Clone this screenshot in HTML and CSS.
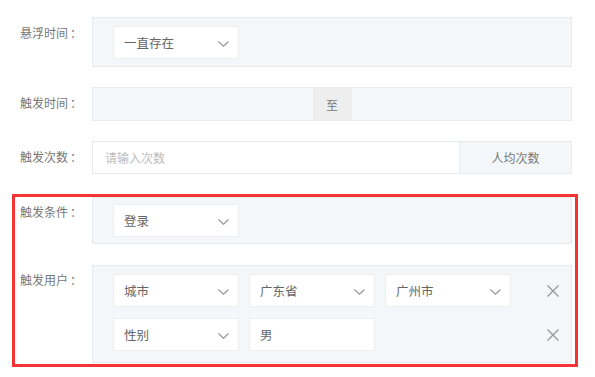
FILE: index.html
```html
<!DOCTYPE html>
<html lang="zh-CN">
<head>
  <meta charset="UTF-8">
  <title>触发设置</title>
  <link rel="stylesheet" href="styles.css">
</head>
<body>
  <div class="form">

    <!-- 悬浮时间 -->
    <div class="form-row">
      <div class="form-label">悬浮时间<span class="colon">：</span></div>
      <div class="form-box">
        <div class="select"><span>一直存在</span><svg class="chevron" width="11" height="6" viewBox="0 0 11 6"><path d="M0.5 0.5 L5.5 5.3 L10.5 0.5" fill="none" stroke="#9a9a9a" stroke-width="1.2"/></svg></div>
      </div>
    </div>

    <!-- 触发时间 -->
    <div class="form-row">
      <div class="form-label">触发时间<span class="colon">：</span></div>
      <div class="range">
        <div class="range-input"></div>
        <div class="range-sep">至</div>
        <div class="range-input"></div>
      </div>
    </div>

    <!-- 触发次数 -->
    <div class="form-row">
      <div class="form-label">触发次数<span class="colon">：</span></div>
      <div class="input-group">
        <div class="text-input">请输入次数</div>
        <div class="addon">人均次数</div>
      </div>
    </div>

    <!-- highlighted part -->
    <div class="highlight">
      <div class="form-row">
        <div class="form-label">触发条件<span class="colon">：</span></div>
        <div class="form-box">
          <div class="select"><span>登录</span><svg class="chevron" width="11" height="6" viewBox="0 0 11 6"><path d="M0.5 0.5 L5.5 5.3 L10.5 0.5" fill="none" stroke="#9a9a9a" stroke-width="1.2"/></svg></div>
        </div>
      </div>

      <div class="form-row">
        <div class="form-label">触发用户<span class="colon">：</span></div>
        <div class="form-box user-box">
          <div class="user-line">
            <div class="select"><span>城市</span><svg class="chevron" width="11" height="6" viewBox="0 0 11 6"><path d="M0.5 0.5 L5.5 5.3 L10.5 0.5" fill="none" stroke="#9a9a9a" stroke-width="1.2"/></svg></div>
            <div class="select"><span>广东省</span><svg class="chevron" width="11" height="6" viewBox="0 0 11 6"><path d="M0.5 0.5 L5.5 5.3 L10.5 0.5" fill="none" stroke="#9a9a9a" stroke-width="1.2"/></svg></div>
            <div class="select"><span>广州市</span><svg class="chevron" width="11" height="6" viewBox="0 0 11 6"><path d="M0.5 0.5 L5.5 5.3 L10.5 0.5" fill="none" stroke="#9a9a9a" stroke-width="1.2"/></svg></div>
            <svg class="remove" width="12" height="12" viewBox="0 0 12 12"><path d="M0.5 0.5 L11.5 11.5 M11.5 0.5 L0.5 11.5" stroke="#999" stroke-width="1.4"/></svg>
          </div>
          <div class="user-line">
            <div class="select"><span>性别</span><svg class="chevron" width="11" height="6" viewBox="0 0 11 6"><path d="M0.5 0.5 L5.5 5.3 L10.5 0.5" fill="none" stroke="#9a9a9a" stroke-width="1.2"/></svg></div>
            <div class="select no-arrow"><span>男</span></div>
            <svg class="remove" width="12" height="12" viewBox="0 0 12 12"><path d="M0.5 0.5 L11.5 11.5 M11.5 0.5 L0.5 11.5" stroke="#999" stroke-width="1.4"/></svg>
          </div>
        </div>
      </div>
    </div>

  </div>
</body>
</html>
```

FILE: styles.css
```css
/* General */
* {
  margin: 0;
  padding: 0;
  box-sizing: border-box;
}

body {
  font-family: "Noto Sans CJK SC", "Microsoft YaHei", sans-serif;
  font-size: 12px;
  color: #666;
  background-color: #fff;
}

.form {
  padding: 17px 0 0 20px;
  width: 572px;
}

/* Rows */
.form-row {
  display: flex;
  align-items: flex-start;
  margin-bottom: 20px;
}

.form-label {
  width: 72px;
  flex-shrink: 0;
  line-height: 32px;
  color: #777;
}

.colon {
  font-family: "Noto Sans CJK JP", sans-serif;
  margin-left: 2px;
}

.form-box {
  flex: 1;
  background-color: #f4f7fa;
  border: 1px solid #e8ebee;
  padding: 8px 20px 7px;
}

/* Select */
.select {
  width: 126px;
  height: 33px;
  background-color: #fff;
  border: 1px solid #eceef1;
  display: flex;
  align-items: center;
  justify-content: space-between;
  padding: 0 9px 0 10px;
  color: #666;
  font-size: 12.5px;
}

.chevron {
  margin-top: 2px;
}

/* Time range */
.range {
  flex: 1;
  display: flex;
  height: 34px;
  border: 1px solid #e8ebee;
  background-color: #f4f7fa;
}

.range-input {
  flex: 1;
}

.range-sep {
  width: 39px;
  background-color: #eeeeee;
  display: flex;
  align-items: center;
  justify-content: center;
  color: #777;
}

/* Count input */
.input-group {
  flex: 1;
  display: flex;
  height: 33px;
  border: 1px solid #e8ebee;
}

.text-input {
  flex: 1;
  background-color: #fff;
  padding-left: 12px;
  line-height: 31px;
  color: #bcbcbc;
}

.addon {
  width: 112px;
  background-color: #f4f7fa;
  border-left: 1px solid #e8ebee;
  display: flex;
  align-items: center;
  justify-content: center;
  color: #777;
}

/* Highlight frame */
.highlight {
  margin-left: -8px;
  margin-right: -6px;
  border: 3px solid #f23434;
  padding: 0 3px 1px 5px;
}

.highlight .form-row {
  margin-bottom: 21px;
}

.highlight .form-row:last-child {
  margin-bottom: 0;
}

.highlight .form-label {
  line-height: 30px;
}

.highlight .form-box {
  padding: 6px 20px;
}

/* Trigger users */
.highlight .user-box {
  padding: 8px 12px 11px 20px;
  display: flex;
  flex-direction: column;
  gap: 11px;
}

.user-line {
  display: flex;
  align-items: center;
  gap: 10px;
}

.remove {
  margin-left: auto;
}
```
